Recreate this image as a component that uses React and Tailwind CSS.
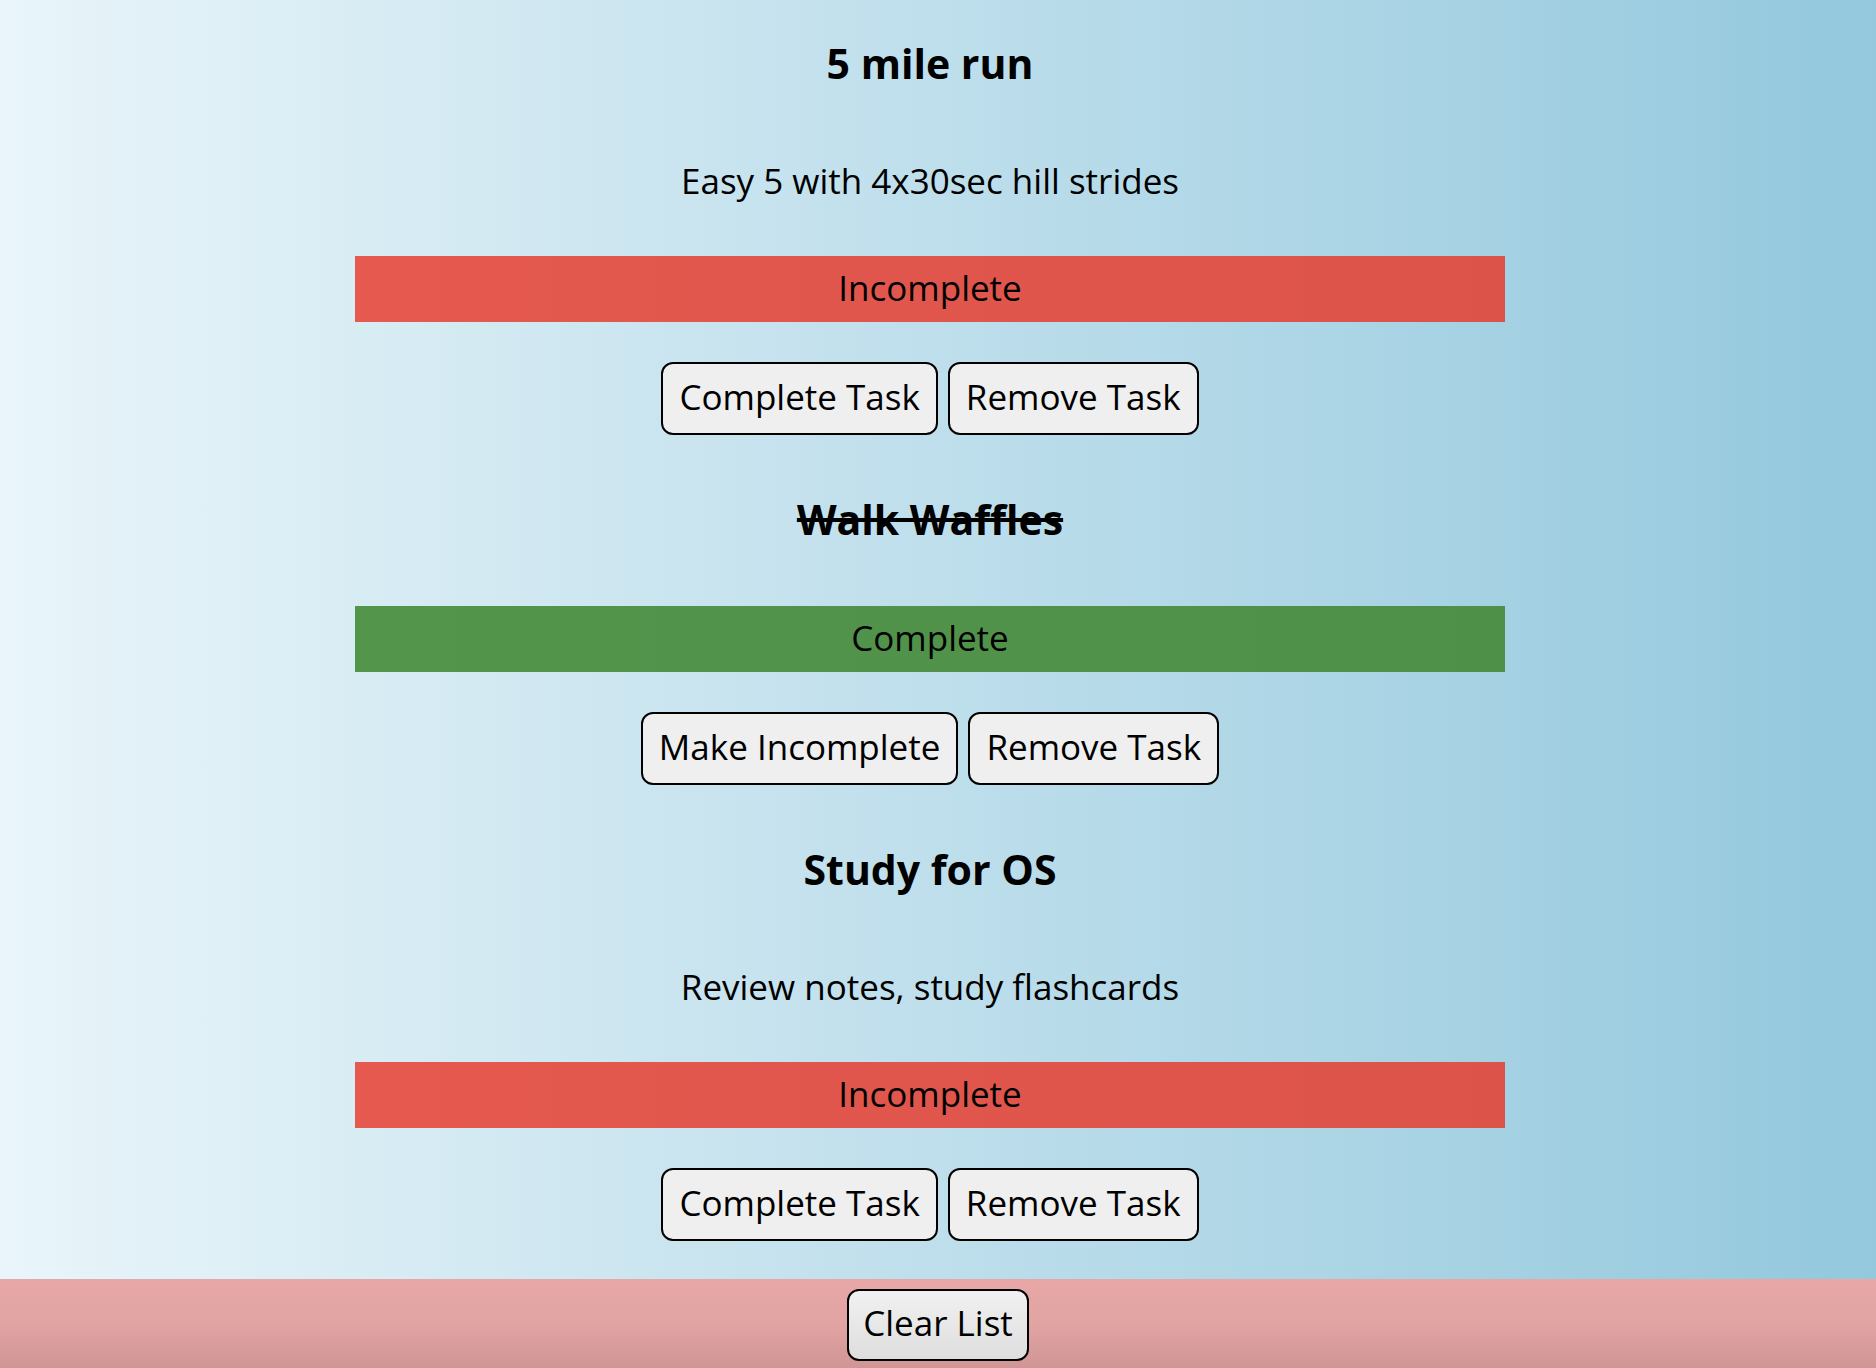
import React, { useState } from 'react';

const initialTasks = [
  { id: 1, title: '5 mile run', description: 'Easy 5 with 4x30sec hill strides', done: false },
  { id: 2, title: 'Walk Waffles', description: '', done: true },
  { id: 3, title: 'Study for OS', description: 'Review notes, study flashcards', done: false },
];

const btn =
  'h-[73px] px-[16px] pb-[4px] rounded-[12px] border-2 border-black bg-[#efefef] text-[35px] leading-none text-black';

const TaskItem = ({ task, first, onToggle, onRemove }) => {
  return (
    <div className={`flex flex-col items-center ${first ? '' : 'mt-[60px]'}`}>
      <h2 className={`h-[48px] text-[41px] leading-[48px] font-bold ${task.done ? 'line-through' : ''}`}>
        {task.title}
      </h2>
      {task.description && (
        <p className="mt-[70px] h-[48px] text-[35px] leading-[48px]">{task.description}</p>
      )}
      <div
        className={`${task.description ? 'mt-[51px]' : 'mt-[63px]'} w-[1150px] h-[66px] pb-[2px] flex items-center justify-center text-[35px] ${
          task.done
            ? 'bg-linear-to-r from-[#53954b] to-[#4f9049]'
            : 'bg-linear-to-r from-[#e5594e] to-[#dc534a]'
        }`}
      >
        {task.done ? 'Complete' : 'Incomplete'}
      </div>
      <div className="mt-[40px] flex gap-[10px]">
        <button className={btn} onClick={() => onToggle(task.id)}>
          {task.done ? 'Make Incomplete' : 'Complete Task'}
        </button>
        <button className={btn} onClick={() => onRemove(task.id)}>
          Remove Task
        </button>
      </div>
    </div>
  );
};

export default function App() {
  const [tasks, setTasks] = useState(initialTasks);

  const toggle = (id) =>
    setTasks((t) => t.map((x) => (x.id === id ? { ...x, done: !x.done } : x)));
  const remove = (id) => setTasks((t) => t.filter((x) => x.id !== id));

  return (
    <div
      className="h-screen flex flex-col overflow-hidden bg-linear-to-r from-[#e9f5fa] to-[#93c8dd] text-black"
      style={{ fontFamily: '"Open Sans", "Noto Sans", sans-serif' }}
    >
      <main className="flex-1 pt-[39px] pr-[16px]">
        {tasks.map((task, i) => (
          <TaskItem key={task.id} task={task} first={i === 0} onToggle={toggle} onRemove={remove} />
        ))}
      </main>
      <footer className="h-[89px] shrink-0 flex justify-center pt-[10px] bg-linear-to-b from-[#e7a7a7] via-[#e2a3a3] to-[#d09595]">
        <button
          className="h-[72px] px-[14px] pb-[5px] rounded-[12px] border-2 border-black bg-linear-to-b from-[#f1f1f1] to-[#dedede] text-[35px] leading-none"
          onClick={() => setTasks([])}
        >
          Clear List
        </button>
      </footer>
    </div>
  );
}
